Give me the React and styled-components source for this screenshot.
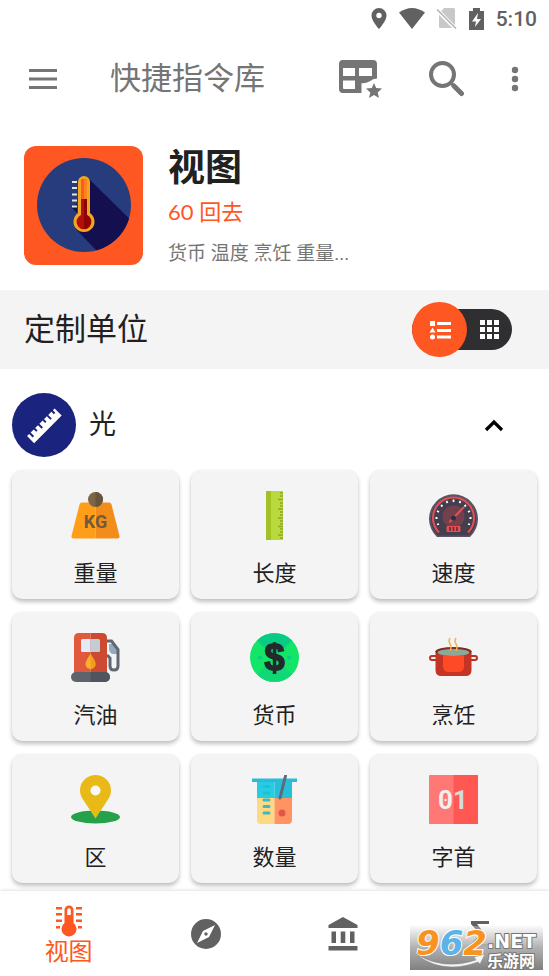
import React, { useState } from "react";
import styled, { createGlobalStyle } from "styled-components";

const CJK = `Roboto, "Noto Sans CJK SC", sans-serif`;
const ORANGE = "#ff5722";

const GlobalStyle = createGlobalStyle`
  *, *::before, *::after { box-sizing: border-box; }
  body { margin: 0; background: #fff; color: #212121; font-family: ${CJK}; }
  h1, h2, h3, p { margin: 0; font-weight: 400; }
  button { border: 0; padding: 0; background: none; color: inherit; font: inherit; cursor: pointer; }
  svg { display: block; flex: none; }
`;

const Screen = styled.div`
  display: flex;
  flex-direction: column;
  min-height: 100vh;
`;

const StatusBar = styled.div`
  display: flex;
  align-items: center;
  justify-content: flex-end;
  gap: 12px;
  height: 37px;
  padding: 0 12px;
  color: #616161;
`;

const Clock = styled.time`
  font-family: Roboto, sans-serif;
  font-size: 21px;
  line-height: 24px;
  font-weight: 500;
`;

const AppBar = styled.header`
  display: flex;
  align-items: center;
  height: 84px;
  padding: 0 30px 0 28px;
  color: #757575;
`;

const AppTitle = styled.h1`
  flex: 1;
  padding-left: 52px;
  font-size: 31px;
  line-height: 40px;
`;

const Actions = styled.div`
  display: flex;
  align-items: center;
  gap: 46px;
`;

const IconButton = styled.button`
  display: flex;
  align-items: center;
`;

const Hero = styled.section`
  display: flex;
  gap: 25px;
  padding: 25px 24px 14px;
`;

const HeroText = styled.div`
  display: flex;
  flex-direction: column;
`;

const HeroTitle = styled.h2`
  font-size: 37px;
  line-height: 46px;
  font-weight: 700;
`;

const HeroCount = styled.p`
  font-family: Lato, "Noto Sans CJK SC", sans-serif;
  font-size: 22px;
  line-height: 40px;
  color: ${ORANGE};
`;

const HeroSummary = styled.p`
  font-size: 19px;
  line-height: 44px;
  color: #757575;
`;

const Band = styled.section`
  display: flex;
  align-items: center;
  justify-content: space-between;
  height: 79px;
  padding: 0 37px 0 24px;
  background: #f4f4f4;
`;

const BandTitle = styled.h2`
  font-size: 31px;
  line-height: 44px;
`;

const Switch = styled.div`
  display: flex;
  align-items: center;
  justify-content: space-between;
  width: 100px;
  height: 41px;
  border-radius: 21px;
  background: #2f2f31;
  color: #fff;
`;

const SwitchOption = styled.button`
  display: flex;
  align-items: center;
  justify-content: center;
  width: ${(p) => (p.$active ? 55 : 45)}px;
  height: ${(p) => (p.$active ? 55 : 41)}px;
  border-radius: 50%;
  background: ${(p) => (p.$active ? ORANGE : "transparent")};
`;

const GroupHeader = styled.button`
  display: flex;
  align-items: center;
  gap: 13px;
  width: 100%;
  padding: 24px 45px 13px 12px;
  text-align: left;
`;

const GroupName = styled.span`
  flex: 1;
  font-size: 27px;
  line-height: 40px;
`;

const CardGrid = styled.div`
  display: grid;
  grid-template-columns: repeat(3, 1fr);
  gap: 13px 12px;
  padding: 0 12px 8px;
`;

const Card = styled.button`
  display: flex;
  flex-direction: column;
  align-items: center;
  gap: 18px;
  height: 129px;
  padding-top: 21px;
  border-radius: 10px;
  background: #f4f4f4;
  box-shadow: 0 3px 4px rgba(0, 0, 0, 0.24), 0 0 2px rgba(0, 0, 0, 0.06);
`;

const CardLabel = styled.span`
  font-size: 22px;
  line-height: 32px;
`;

const Main = styled.main`
  flex: 1;
`;

const BottomNav = styled.nav`
  position: relative;
  display: grid;
  grid-template-columns: repeat(4, 1fr);
  height: 85px;
  background: #fff;
  box-shadow: 0 -1px 3px rgba(0, 0, 0, 0.12);
`;

const NavItem = styled.a`
  display: flex;
  flex-direction: column;
  align-items: center;
  justify-content: center;
  padding-top: ${(p) => (p.$active ? 5 : 0)}px;
  color: ${(p) => (p.$active ? ORANGE : "#616161")};
  font-size: 24px;
  line-height: 30px;
  text-decoration: none;
`;

const Badge = styled.div`
  position: absolute;
  right: 6px;
  bottom: 6px;
  display: flex;
  width: 133px;
  height: 44px;
  padding-left: 6px;
  background: linear-gradient(rgba(240, 240, 240, 0.3), #b0b0b0 50%, #808080);
`;

const BadgeNumber = styled.span`
  font: italic 700 34px/34px "DejaVu Sans", sans-serif;
  color: #f7931e;
  paint-order: stroke fill;
  -webkit-text-stroke: 2px #fff;
`;

const BadgeBlue = styled.span`
  color: #5bb3e8;
`;

const BadgeSide = styled.div`
  display: flex;
  flex-direction: column;
  padding-top: 6px;
  color: #fff;
  white-space: nowrap;
  paint-order: stroke fill;
  -webkit-text-stroke: 2px #777;
`;

const BadgeNet = styled.span`
  font: 700 19px/19px "DejaVu Sans", sans-serif;
`;

const BadgeSite = styled.span`
  font: 700 16px/18px "Noto Sans CJK SC", sans-serif;
`;

const Swoosh = styled.svg`
  position: absolute;
  left: 5px;
  bottom: 1px;
`;

/* ---------- status icons ---------- */
const PinIcon = () => (
  <svg width="16" height="21" viewBox="0 0 16 21" fill="currentColor">
    <path fillRule="evenodd" d="M8 0a7.500 7.500 0 0 0-7.500 7.500C.500 13 8 21 8 21s7.500-8 7.500-13.500A7.500 7.500 0 0 0 8 0Zm0 4.800a2.700 2.700 0 1 1 0 5.400 2.700 2.700 0 0 1 0-5.400Z" />
  </svg>
);
const WifiIcon = () => (
  <svg width="26" height="21" viewBox="0 0 26 21" fill="currentColor">
    <path d="M0 4.500Q13-4.500 26 4.500L13 21Z" />
  </svg>
);
const SimIcon = () => (
  <svg width="20" height="21" viewBox="0 0 20 21">
    <path d="M7 0h9.500q1.500 0 1.500 1.500V20H3.500Q2 20 2 18.500V6Z" fill="#c8c8c8" />
    <path d="M0 2 19 21" stroke="#fff" strokeWidth="4" />
    <path d="M0 1.500 19 20.500" stroke="#b0b0b0" strokeWidth="1.500" />
  </svg>
);
const BatteryIcon = () => (
  <svg width="15" height="22" viewBox="0 0 15 22">
    <path d="M4 0h7v3h4v19H0V3h4Z" fill="currentColor" />
    <path d="M9 5 3 13.500h4L6 19l6-8H8Z" fill="#fff" />
  </svg>
);

/* ---------- toolbar icons ---------- */
const MenuIcon = () => (
  <svg width="30" height="22" viewBox="0 0 30 22" stroke="currentColor" strokeWidth="3">
    <path d="M1 2.500h28M1 11h28M1 19.500h28" />
  </svg>
);
const TableStarIcon = () => (
  <svg width="44" height="38" viewBox="0 0 44 38" fill="currentColor">
    <path fillRule="evenodd" d="M4 0h30q4 0 4 4v14.500q-4 0-7.500 3-5 2.500-8 1.500V33H4q-4 0-4-4V4Q0 0 4 0Zm0 8v8h12V8Zm16 0v8h13V8ZM4 20.500V28q0 1 1 1h11v-8.500Z" />
    <path d="m35 23 2.200 5 5.800.500-4.300 4 1.300 5.500-5-3-5 3 1.300-5.500-4.300-4 5.800-.500Z" />
  </svg>
);
const SearchIcon = () => (
  <svg width="36" height="36" viewBox="0 0 36 36" fill="none" stroke="currentColor">
    <circle cx="13.500" cy="13.500" r="11.500" strokeWidth="4" />
    <path d="m22 22 3 3" strokeWidth="3" />
    <path d="m25 25 7.500 7.500" strokeWidth="5" strokeLinecap="round" />
  </svg>
);
const MoreIcon = () => (
  <svg width="8" height="26" viewBox="0 0 8 26" fill="currentColor">
    <circle cx="4" cy="4" r="3.200" />
    <circle cx="4" cy="13" r="3.200" />
    <circle cx="4" cy="22" r="3.200" />
  </svg>
);

const HeroIcon = () => (
  <svg width="119" height="119" viewBox="0 0 119 119">
    <defs>
      <clipPath id="disc"><circle cx="60" cy="59" r="47" /></clipPath>
    </defs>
    <rect width="119" height="119" rx="12" fill={ORANGE} />
    <circle cx="60" cy="59" r="47" fill="#273c7c" />
    <g clipPath="url(#disc)">
      <path d="m64 32 52 51-30 36-34-36 5-18Z" fill="#140f4e" />
      <path d="m48 62 5-5v10Z" fill="#140f4e" />
    </g>
    <path d="M54 36a6 6 0 0 1 12 0v31a10.500 10.500 0 1 1-12 0Z" fill="#f2a61d" />
    <path d="M57 36a3 3 0 0 1 6 0v33a7.500 7.500 0 1 1-6 0Z" fill="#b30e0a" />
    <path d="M57 53V36a3 3 0 0 1 6 0v17Z" fill="#ff5a1f" />
    <path d="M60 33a3 3 0 0 1 3 3v17h-3Z" fill="#ff8220" />
    <path d="M60 53h3v16a7.500 7.500 0 0 1-3 14Z" fill="#8c0505" />
    <path d="M48 36h5M48 42h5M48 48.500h5M48 54.500h5M48 60.500h5" stroke="#e8e2e2" strokeWidth="1.800" />
  </svg>
);

const ListIcon = () => (
  <svg width="22" height="20" viewBox="0 0 22 20" fill="currentColor">
    <path d="M1 1h5v5H1ZM3.500 7.500l3 5h-6Z" />
    <circle cx="3.500" cy="17" r="2.500" />
    <path d="M8 2h14v3H8ZM8 9h14v3H8ZM8 15.500h14v3H8Z" />
  </svg>
);
const GridIcon = () => (
  <svg width="19" height="19" viewBox="0 0 19 19" fill="currentColor">
    <path d="M0 0h5v5H0ZM7 0h5v5H7ZM14 0h5v5h-5ZM0 7h5v5H0ZM7 7h5v5H7ZM14 7h5v5h-5ZM0 14h5v5H0ZM7 14h5v5H7ZM14 14h5v5h-5Z" />
  </svg>
);
const RulerDisc = () => (
  <svg width="64" height="64" viewBox="0 0 64 64">
    <circle cx="32" cy="32" r="32" fill="#1a237e" />
    <g transform="translate(32 32.500) rotate(-45)" fill="#fff">
      <path d="M-19.500-4.500h3v5h2v-5h4.500v3.500h2v-3.500h4v5h2v-5h4.500v3.500h2v-3.500h4v5h2v-5h4.500v3.500h2v-3.500h2.500v10h-39Z" />
    </g>
  </svg>
);
const ChevronUp = () => (
  <svg width="20" height="14" viewBox="0 0 20 14" fill="none" stroke="#000" strokeWidth="3.200">
    <path d="m2 12 8-8 8 8" />
  </svg>
);

/* ---------- unit icons, all on a 49px canvas ---------- */
const Art = ({ children }) => (
  <svg width="49" height="49" viewBox="0 0 49 49">{children}</svg>
);
const WeightIcon = () => (
  <Art>
    <path d="M11 11.500h13.500v36H2.500Q0 47.500 .500 45L8.500 13.500Q9 11.500 11 11.500Z" fill="#ff9f19" />
    <path d="M24.500 11.500H38q2 0 2.500 2l8 31.500q.500 2.500-2 2.500h-22Z" fill="#f28c1b" />
    <circle cx="24.500" cy="8.500" r="7.500" fill="#7d6546" />
    <path d="M24.500 1a7.500 7.500 0 0 1 0 15Z" fill="#66543b" />
    <text x="24.500" y="36.500" textAnchor="middle" fontFamily="Roboto, sans-serif" fontSize="18" fontWeight="700" fill="#755a35">KG</text>
  </Art>
);
const LengthIcon = () => (
  <Art>
    <path d="M16 0h17v49H16Z" fill="#bad93d" />
    <path d="M16 0h5v49h-5Z" fill="#a3c127" />
    <path d="M30 2h3M30 5h3M28 8.500h5M30 12h3M30 15h3M28 18h5M30 21h3M30 24h3M28 27h5M30 30h3M30 33h3M28 35.500h5M30 38h3M30 41h3M28 44h5M30 47h3" stroke="#8fa628" strokeWidth="1.400" />
  </Art>
);
const SpeedIcon = () => (
  <Art>
    <path d="M7.500 45.500A24.500 24.500 0 1 1 41.500 45.500Q41 46 40 46H9Q8 46 7.500 45.500Z" fill="#5b5368" />
    <path d="M9 44.500A22.500 22.500 0 1 1 40 44.500Z" fill="#433f4f" />
    <path d="M10 41.500A20.500 20.500 0 1 1 39 41.500" fill="none" stroke="#e94f4f" strokeWidth="2" />
    <path d="M8 33.500l2-.500M6.500 27h2M8 20l2 1M12 14l1.500 1.500M17.500 10l1 2M24.500 8.500v2.500M31.500 10l-1 2M37 14l-1.500 1.500M41 20l-2 1M42.500 27h-2M41 33.500l-2-.500" stroke="#fff" strokeWidth="1.800" />
    <circle cx="24.500" cy="25.500" r="11" fill="#75404d" />
    <path d="m21 30.500 13.500-14" stroke="#e94f4f" strokeWidth="2" strokeLinecap="round" />
    <circle cx="24.500" cy="27" r="2.500" fill="#302e3a" />
    <rect x="17.500" y="35" width="14" height="6" rx="1" fill="#e94f4f" />
    <path d="M21 36v4M24.500 36v4M28 36v4" stroke="#542b38" strokeWidth="1.500" />
  </Art>
);
const FuelIcon = () => (
  <Art>
    <path d="M38 11h4l5 6v4h-6q-3-2-3-5Z" fill="#92aabb" />
    <path d="M35 8h5.500l6.500 8.500V33q0 4-4 4t-4-4v-8l-3-3" fill="none" stroke="#606770" strokeWidth="3" />
    <path d="M19.500 0H8Q3 0 3 5v35h16.500Z" fill="#e2583b" />
    <path d="M19.500 0H31q5 0 5 5v35H19.500Z" fill="#cc4a32" />
    <path d="M11.500 6h8v13h-8q-1.500 0-1.500-1.500v-10Q10 6 11.500 6Z" fill="#e4eaf7" />
    <path d="M19.500 6h8q1.500 0 1.500 1.500v10q0 1.500-1.500 1.500h-8Z" fill="#c3cdd5" />
    <path d="M19.500 21q5 7 5 10a5 5 0 0 1-10 0q0-3 5-10Z" fill="#fbb034" />
    <path d="M19.500 21q5 7 5 10a5 5 0 0 1-5 5Z" fill="#f39d18" />
    <rect y="39" width="39" height="10" rx="5" fill="#5e636c" />
    <path d="M19.500 39H34a5 5 0 0 1 0 10H19.500Z" fill="#50545d" />
  </Art>
);
const CurrencyIcon = () => (
  <Art>
    <circle cx="24.500" cy="24.500" r="24.500" fill="#13e568" />
    <path d="M24.500 24.500 7 7.500A24.500 24.500 0 0 1 42 7.500Z" fill="#0acb83" />
    <path d="M24.500 24.500 42 41.500A24.500 24.500 0 0 1 7 41.500Z" fill="#10d876" />
    <circle cx="10" cy="24.500" r="2" fill="#0acb83" />
    <circle cx="39" cy="24.500" r="2" fill="#0acb83" />
    <text x="24.500" y="37" textAnchor="middle" fontFamily="Liberation Sans, sans-serif" fontSize="36" fontWeight="700" fill="#222b29" stroke="#222b29" strokeWidth="1.500">$</text>
  </Art>
);
const CookingIcon = () => (
  <Art>
    <path d="M7 23H3q-2 0-2 2t2 2h4M42 23h4q2 0 2 2t-2 2h-4" fill="none" stroke="#b93428" strokeWidth="2" />
    <path d="M6.500 18h36v19q0 6-6 6h-24q-6 0-6-6Z" fill="#c53324" />
    <path d="M14 20h21v13q0 6-6 6h-9q-6 0-6-6Z" fill="#ff4a27" />
    <ellipse cx="24.500" cy="18.500" rx="18" ry="4.500" fill="#812a20" />
    <ellipse cx="24.500" cy="19.500" rx="16" ry="3.500" fill="#8da798" />
    <path d="M21 5q-2 3 0 6t0 7M27 5q-2 3 0 6t0 7" fill="none" stroke="#f2b45c" strokeWidth="1.500" />
  </Art>
);
const AreaIcon = () => (
  <Art>
    <ellipse cx="24.500" cy="42" rx="24.500" ry="6.500" fill="#24a14a" />
    <path d="M24.500 0A15.500 15.500 0 0 0 9 15.500Q9 21 13 26l11.500 17.500L36 26q4-5 4-10.500A15.500 15.500 0 0 0 24.500 0Z" fill="#e9b918" />
    <circle cx="24.500" cy="15.500" r="5" fill="#f8f8f8" />
  </Art>
);
const VolumeIcon = () => (
  <Art>
    <path d="M7 5h17.500v19H7Z" fill="#26cde2" />
    <path d="M24.500 5H42v19H24.500Z" fill="#25bedb" />
    <path d="M7 23h17.500v26H11q-4 0-4-4Z" fill="#ffd982" />
    <path d="M24.500 23H42v22q0 4-4 4H24.500Z" fill="#ff9462" />
    <path d="M2 3.500h45v3.500H2Z" fill="#2bbbd8" />
    <path d="M35.500 1 30 23" stroke="#606a73" strokeWidth="3" strokeLinecap="round" />
    <path d="M14 11.500h5M14 18h5" stroke="#1fbdd4" strokeWidth="2.500" strokeLinecap="round" />
    <path d="M14 25h5M14 31.500h5M14 38h5" stroke="#39b9ca" strokeWidth="3" strokeLinecap="round" />
    <circle cx="32" cy="38" r="3.500" fill="#df574b" />
  </Art>
);
const PrefixIcon = () => (
  <Art>
    <rect width="49" height="49" rx="1" fill="#ff7875" />
    <path d="M24.500 0H48q1 0 1 1v47q0 1-1 1H24.500Z" fill="#ff5853" />
    <text x="24" y="34" textAnchor="middle" fontFamily="Roboto, sans-serif" fontSize="26" fontWeight="700" fill="#f4eeee">0<tspan fill="#d6dadd">1</tspan></text>
    <circle cx="16.500" cy="25" r="1.200" fill="#f4eeee" />
  </Art>
);

/* ---------- bottom navigation icons ---------- */
const ThermoIcon = () => (
  <svg width="28" height="32" viewBox="0 0 28 32" fill="currentColor">
    <path fillRule="evenodd" d="M9.500 5a4.500 4.500 0 0 1 9 0v13a7.500 7.500 0 1 1-9 0ZM12.200 5v5h3.600V5a1.800 1.800 0 0 0-3.600 0Z" />
    <path d="M1 2h6v2.500H1ZM1 8h6v2.500H1ZM1 14.500h6V17H1ZM1 21h4v2.500H1ZM21 2h6v2.500h-6ZM21 8h6v2.500h-6ZM21 14.500h6V17h-6ZM23 21h4v2.500h-4Z" />
  </svg>
);
const CompassIcon = () => (
  <svg width="32" height="32" viewBox="0 0 32 32" fill="currentColor">
    <path fillRule="evenodd" d="M16 1a15 15 0 1 0 0 30 15 15 0 0 0 0-30Zm9 6-6 12-12 6 6-12Zm-9 7.300a1.700 1.700 0 1 0 0 3.400 1.700 1.700 0 0 0 0-3.400Z" />
  </svg>
);
const BankIcon = () => (
  <svg width="30" height="34" viewBox="0 0 30 34" fill="currentColor">
    <path d="M15 0 29.500 8v3H.500V8ZM3.500 14.500H8V26H3.500ZM12.700 14.500h4.600V26h-4.600ZM22 14.500h4.500V26H22ZM.500 29h29v4.500H.500Z" />
  </svg>
);
const SigmaIcon = () => (
  <svg width="20" height="26" viewBox="0 0 20 26" fill="currentColor">
    <path d="M1 0h18v3H7l8 10-8 10h12v3H1v-3l9-10L1 3Z" />
  </svg>
);

const units = [
  ["重量", WeightIcon],
  ["长度", LengthIcon],
  ["速度", SpeedIcon],
  ["汽油", FuelIcon],
  ["货币", CurrencyIcon],
  ["烹饪", CookingIcon],
  ["区", AreaIcon],
  ["数量", VolumeIcon],
  ["字首", PrefixIcon],
];

export default function App() {
  const [view, setView] = useState("list");
  const [open, setOpen] = useState(true);
  return (
    <Screen>
      <GlobalStyle />
      <StatusBar>
        <PinIcon />
        <WifiIcon />
        <SimIcon />
        <BatteryIcon />
        <Clock>5:10</Clock>
      </StatusBar>
      <AppBar>
        <IconButton aria-label="菜单"><MenuIcon /></IconButton>
        <AppTitle>快捷指令库</AppTitle>
        <Actions>
          <IconButton aria-label="收藏"><TableStarIcon /></IconButton>
          <IconButton aria-label="搜索"><SearchIcon /></IconButton>
          <IconButton aria-label="更多"><MoreIcon /></IconButton>
        </Actions>
      </AppBar>
      <Main>
        <Hero>
          <HeroIcon />
          <HeroText>
            <HeroTitle>视图</HeroTitle>
            <HeroCount>60 回去</HeroCount>
            <HeroSummary>货币 温度 烹饪 重量...</HeroSummary>
          </HeroText>
        </Hero>
        <Band>
          <BandTitle>定制单位</BandTitle>
          <Switch role="group" aria-label="布局">
            <SwitchOption $active={view === "list"} aria-pressed={view === "list"} aria-label="列表" onClick={() => setView("list")}>
              <ListIcon />
            </SwitchOption>
            <SwitchOption $active={view === "grid"} aria-pressed={view === "grid"} aria-label="网格" onClick={() => setView("grid")}>
              <GridIcon />
            </SwitchOption>
          </Switch>
        </Band>
        <GroupHeader aria-expanded={open} onClick={() => setOpen(!open)}>
          <RulerDisc />
          <GroupName>光</GroupName>
          <ChevronUp />
        </GroupHeader>
        {open && (
          <CardGrid>
            {units.map(([label, Icon]) => (
              <Card key={label}>
                <Icon />
                <CardLabel>{label}</CardLabel>
              </Card>
            ))}
          </CardGrid>
        )}
      </Main>
      <BottomNav>
        <NavItem href="#units" $active aria-current="page">
          <ThermoIcon />
          视图
        </NavItem>
        <NavItem href="#explore" aria-label="探索"><CompassIcon /></NavItem>
        <NavItem href="#bank" aria-label="银行"><BankIcon /></NavItem>
        <NavItem href="#sum" aria-label="求和"><SigmaIcon /></NavItem>
        <Badge>
          <Swoosh width="72" height="16" viewBox="0 0 72 16">
            <path d="M1 1q28 17 60 6l-2-3 11-3-5 10-2-2Q27 22 1 1Z" fill="#f4f4f4" stroke="#888" strokeWidth="0.500" />
          </Swoosh>
          <BadgeNumber>9<BadgeBlue>6</BadgeBlue>2</BadgeNumber>
          <BadgeSide>
            <BadgeNet>.NET</BadgeNet>
            <BadgeSite>乐游网</BadgeSite>
          </BadgeSide>
        </Badge>
      </BottomNav>
    </Screen>
  );
}
